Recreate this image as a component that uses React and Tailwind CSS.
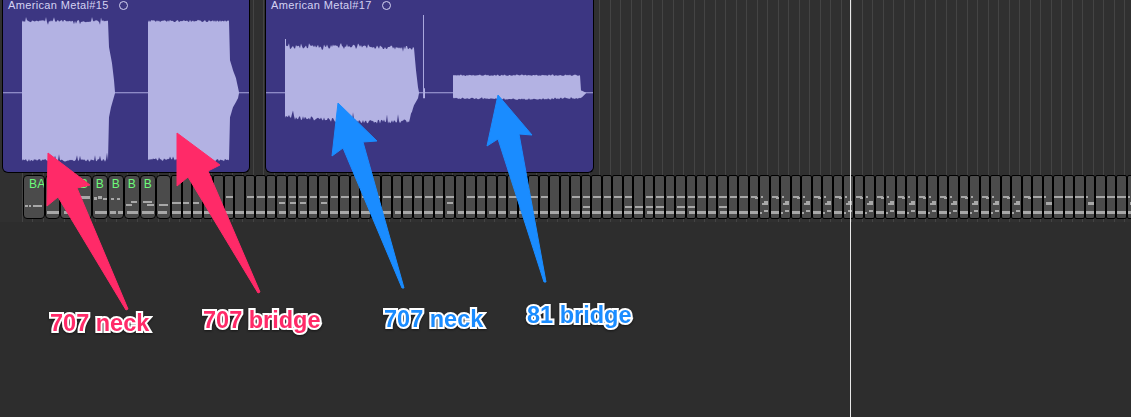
import { useMemo } from 'react';

// deterministic noise so the waveforms stay the same on every render
const noise = (n) => {
  const v = Math.sin(n * 127.1 + 11.7) * 43758.5453;
  return v - Math.floor(v);
};

const lerp = (keys, x) => {
  for (let i = 1; i < keys.length; i++) {
    if (x <= keys[i][0]) {
      const [x0, y0] = keys[i - 1];
      const [x1, y1] = keys[i];
      return y0 + ((y1 - y0) * (x - x0)) / (x1 - x0 || 1);
    }
  }
  return keys[keys.length - 1][1];
};

function wavePoints({ from, to, top, bottom, jitter, spike, jitterTo, seed }) {
  const upper = [];
  const lower = [];
  for (let x = from; x <= to; x += 1) {
    const fade = x > jitterTo ? 0 : 1;
    const a = noise(x + seed);
    const b = noise(x * 2.3 + seed + 5);
    const up = a > 0.9 ? -spike * noise(x + 3) : a > 0.8 ? spike * noise(x + 9) : (a - 0.4) * jitter;
    const down = b > 0.92 ? -spike * 2.2 * noise(x + 7) : (b - 0.5) * jitter;
    upper.push(`${x},${(lerp(top, x) + up * fade).toFixed(1)}`);
    lower.unshift(`${x},${(lerp(bottom, x) + down * fade).toFixed(1)}`);
  }
  return [...upper, ...lower].join(' ');
}

const clips = [
  {
    name: 'American Metal#15',
    width: 'w-[248px]',
    x0: 2,
    x1: 250,
    extra: null,
    waves: [
      {
        from: 22, to: 115, seed: 3, jitter: 3, spike: 4, jitterTo: 107,
        top: [[22, 21], [108, 21], [109, 47], [112, 63], [114, 80], [115, 92]],
        bottom: [[22, 160], [108, 160], [109, 117], [111, 107], [115, 93]],
      },
      {
        from: 148, to: 239, seed: 40, jitter: 2.5, spike: 1.5, jitterTo: 228,
        top: [[148, 21], [229, 21], [230, 60], [233, 70], [236, 78], [239, 92]],
        bottom: [[148, 159], [229, 160], [229.5, 143], [230, 117], [233, 107], [238, 98], [239, 93]],
      },
    ],
  },
  {
    name: 'American Metal#17',
    width: 'w-[329px]',
    x0: 265,
    x1: 594,
    extra: (
      <g>
        <path d="M423.5 15V98" stroke="#a9a7dd" strokeWidth="1" />
        <path d="M285.5 39V60" stroke="#b3b2e3" strokeWidth="1" />
        <path d="M424.5 88V98" stroke="#b3b2e3" strokeWidth="1" />
      </g>
    ),
    waves: [
      {
        from: 285, to: 419, seed: 71, jitter: 5, spike: 4, jitterTo: 413,
        top: [[285, 47], [340, 46], [414, 48], [416, 70], [418, 87], [419, 92]],
        bottom: [[285, 117], [340, 120], [395, 122], [410, 120], [411, 112], [414, 105], [418, 98], [419, 93]],
      },
      {
        from: 453, to: 586, seed: 17, jitter: 1.6, spike: 0.8, jitterTo: 579,
        top: [[453, 75], [580, 75], [580.5, 90], [583, 91], [586, 92.5]],
        bottom: [[453, 98], [520, 99], [580, 98], [582, 97], [586, 93]],
      },
    ],
  },
];

// first cells are wider, the rest sit on a 10.5px grid
const firstEdges = [23, 45, 60, 76, 92, 108, 124, 140, 156, 171];
const edges = [...firstEdges];
while (edges[edges.length - 1] < 1140) edges.push(edges[edges.length - 1] + 10.5);

const handMarks = {
  0: [[1, 29, 3, 2], [5, 29, 2, 2], [9, 29, 9, 2]],
  1: [[1, 35, 13, 3]],
  2: [[2, 25, 6, 2], [3, 35, 11, 3]],
  3: [[2, 20, 11, 3], [1, 35, 5, 3]],
  4: [[1, 21, 3, 3], [5, 20, 4, 3], [10, 22, 4, 2], [2, 35, 12, 3]],
  5: [[2, 22, 3, 2], [8, 22, 3, 2], [1, 35, 6, 3], [9, 35, 5, 3]],
  6: [[1, 28, 6, 2], [6, 25, 6, 2], [2, 35, 11, 3]],
  7: [[2, 25, 9, 2], [6, 28, 7, 2], [1, 35, 12, 3]],
  8: [[2, 28, 9, 2], [1, 35, 9, 3]],
};

function cellMarks(i, left) {
  if (handMarks[i]) return handMarks[i];
  const r = noise(i * 3.1);
  const r2 = noise(i * 5.7);
  if (left < 220) {
    return [[0, 26, r > 0.4 ? 9 : 6, 2], [0, 35, 9, 3]];
  }
  if (left < 740) {
    const marks = [[r2 > 0.75 ? 2 : 0, 35, r2 > 0.75 ? 7 : 9, 3]];
    if (r > 0.12) marks.push([1, 20, 8, 2]);
    if (left > 540 && r2 > 0.45) marks.push([1, 30, 8, 2]);
    else if (r2 > 0.86) marks.push([2, 26, 6, 2]);
    return marks;
  }
  if (left > 1030) {
    // every fourth cell drops its top note to the middle row
    return i % 4 === 0
      ? [[0, 20, 2, 2], [2, 26, 7, 3], [0, 35, 9, 3]]
      : [[0, 20, 9, 2], [0, 35, 9, 3]];
  }
  // two cell riff in the busy part
  return i % 2 === 0
    ? [[1, 20, 6, 2], [5, 21, 3, 2], [0, 35, 9, 3]]
    : [[1, 20, 2, 2], [2, 27, 6, 2], [4, 25, 4, 2], [0, 36, 2, 2], [4, 34, 4, 2]];
}

const arrows = [
  { fill: '#ff2a68', points: '48,153 90,185 77,188 128,309 126,310 58,197 47,206' },
  { fill: '#ff2a68', points: '177,133 220,165 208,171 260,292 258,293 188,177 177,186' },
  { fill: '#1a8cff', points: '338,103 377,141 363,142 404,288 402,288 343,148 332,156' },
  { fill: '#1a8cff', points: '498,95 532,135 519,134 546,282 544,282 498,139 487,146' },
];

const labels = [
  { text: '707 neck', color: 'text-[#ff2a68]', place: 'left-[50px] top-[310px]' },
  { text: '707 bridge', color: 'text-[#ff2a68]', place: 'left-[203px] top-[307px]' },
  { text: '707 neck', color: 'text-[#1a8cff]', place: 'left-[384px] top-[306px]' },
  { text: '81 bridge', color: 'text-[#1a8cff]', place: 'left-[527px] top-[302px]' },
];

function Clip({ clip }) {
  const polys = useMemo(() => clip.waves.map(wavePoints), [clip]);
  const w = clip.x1 - clip.x0;
  return (
    <div className={`${clip.width} h-full shrink-0 flex flex-col rounded-b-[6px] border border-t-0 border-black bg-[#3c3682]`}>
      <div className="h-[11px] shrink-0 flex items-center gap-[10px] pl-[5px] text-[11px] leading-none tracking-[0.35px] text-[#d4d2f2]">
        <span>{clip.name}</span>
        <span className="h-[9px] w-[9px] rounded-full border border-[#d4d2f2]" />
      </div>
      <svg className="block flex-1 min-h-0 w-full" viewBox={`${clip.x0 + 1} 11 ${w - 2} 160`} preserveAspectRatio="none">
        <path d={`M${clip.x0} 92.5H${clip.x1}`} stroke="#a9a7dd" strokeWidth="1" />
        {polys.map((p, i) => (
          <polygon key={i} points={p} fill="#b3b2e3" />
        ))}
        {clip.extra}
      </svg>
    </div>
  );
}

function Cell({ i, left, width }) {
  const label = i === 0 ? 'BA' : i < 8 ? 'B' : null;
  return (
    <div
      style={{ width }}
      className={`relative h-full shrink-0 overflow-hidden border border-black bg-[#4b4b4b] ${i < 9 ? 'rounded-[4px]' : 'rounded-[2px]'}`}
    >
      {label && (
        <div className={`pt-[2px] text-[12px] leading-[12px] tracking-[0.3px] text-[#6dfb7a] ${i === 0 ? 'pl-[5px]' : 'text-center'}`}>
          {label}
        </div>
      )}
      <svg className="absolute inset-0 h-full w-full">
        {cellMarks(i, left).map(([x, y, w, h], k) => (
          <rect key={k} x={x} y={y} width={w} height={h} fill="#a8a8a8" />
        ))}
      </svg>
    </div>
  );
}

export default function App() {
  return (
    <div className="relative h-[417px] w-[1131px] overflow-hidden bg-[#2d2d2d] font-['Liberation_Sans',Arial,sans-serif]">
      <div className="h-[222px] bg-[#303030] bg-[repeating-linear-gradient(90deg,transparent_0,transparent_9.5px,#444444_9.5px,#444444_10.5px)] bg-[position:2px_0]">
        {/* audio regions */}
        <div className="flex h-[172.5px] gap-[15px] pl-[2px]">
          {clips.map((clip) => (
            <Clip key={clip.name} clip={clip} />
          ))}
        </div>

        {/* flex pitch strip */}
        <div className="mt-[2px] flex h-[44px] pl-[23px]">
          {edges.slice(0, -1).map((left, i) => (
            <Cell key={i} i={i} left={left} width={edges[i + 1] - left} />
          ))}
        </div>
      </div>

      {/* playhead */}
      <div className="absolute bottom-0 left-[850px] top-0 w-px bg-[#e8e8e8]" />

      {/* annotations */}
      <svg className="absolute inset-0 h-full w-full" viewBox="0 0 1131 417">
        {arrows.map((a, i) => (
          <polygon key={i} points={a.points} fill={a.fill} stroke={a.fill} strokeWidth="1" strokeLinejoin="round" />
        ))}
      </svg>
      {labels.map((l) => (
        <div
          key={l.place}
          className={`absolute ${l.place} ${l.color} whitespace-nowrap text-[23.5px] font-bold leading-[26px] [-webkit-text-stroke:4px_white] [paint-order:stroke_fill] drop-shadow-[0_1px_1px_rgba(0,0,0,0.5)]`}
        >
          {l.text}
        </div>
      ))}
    </div>
  );
}
